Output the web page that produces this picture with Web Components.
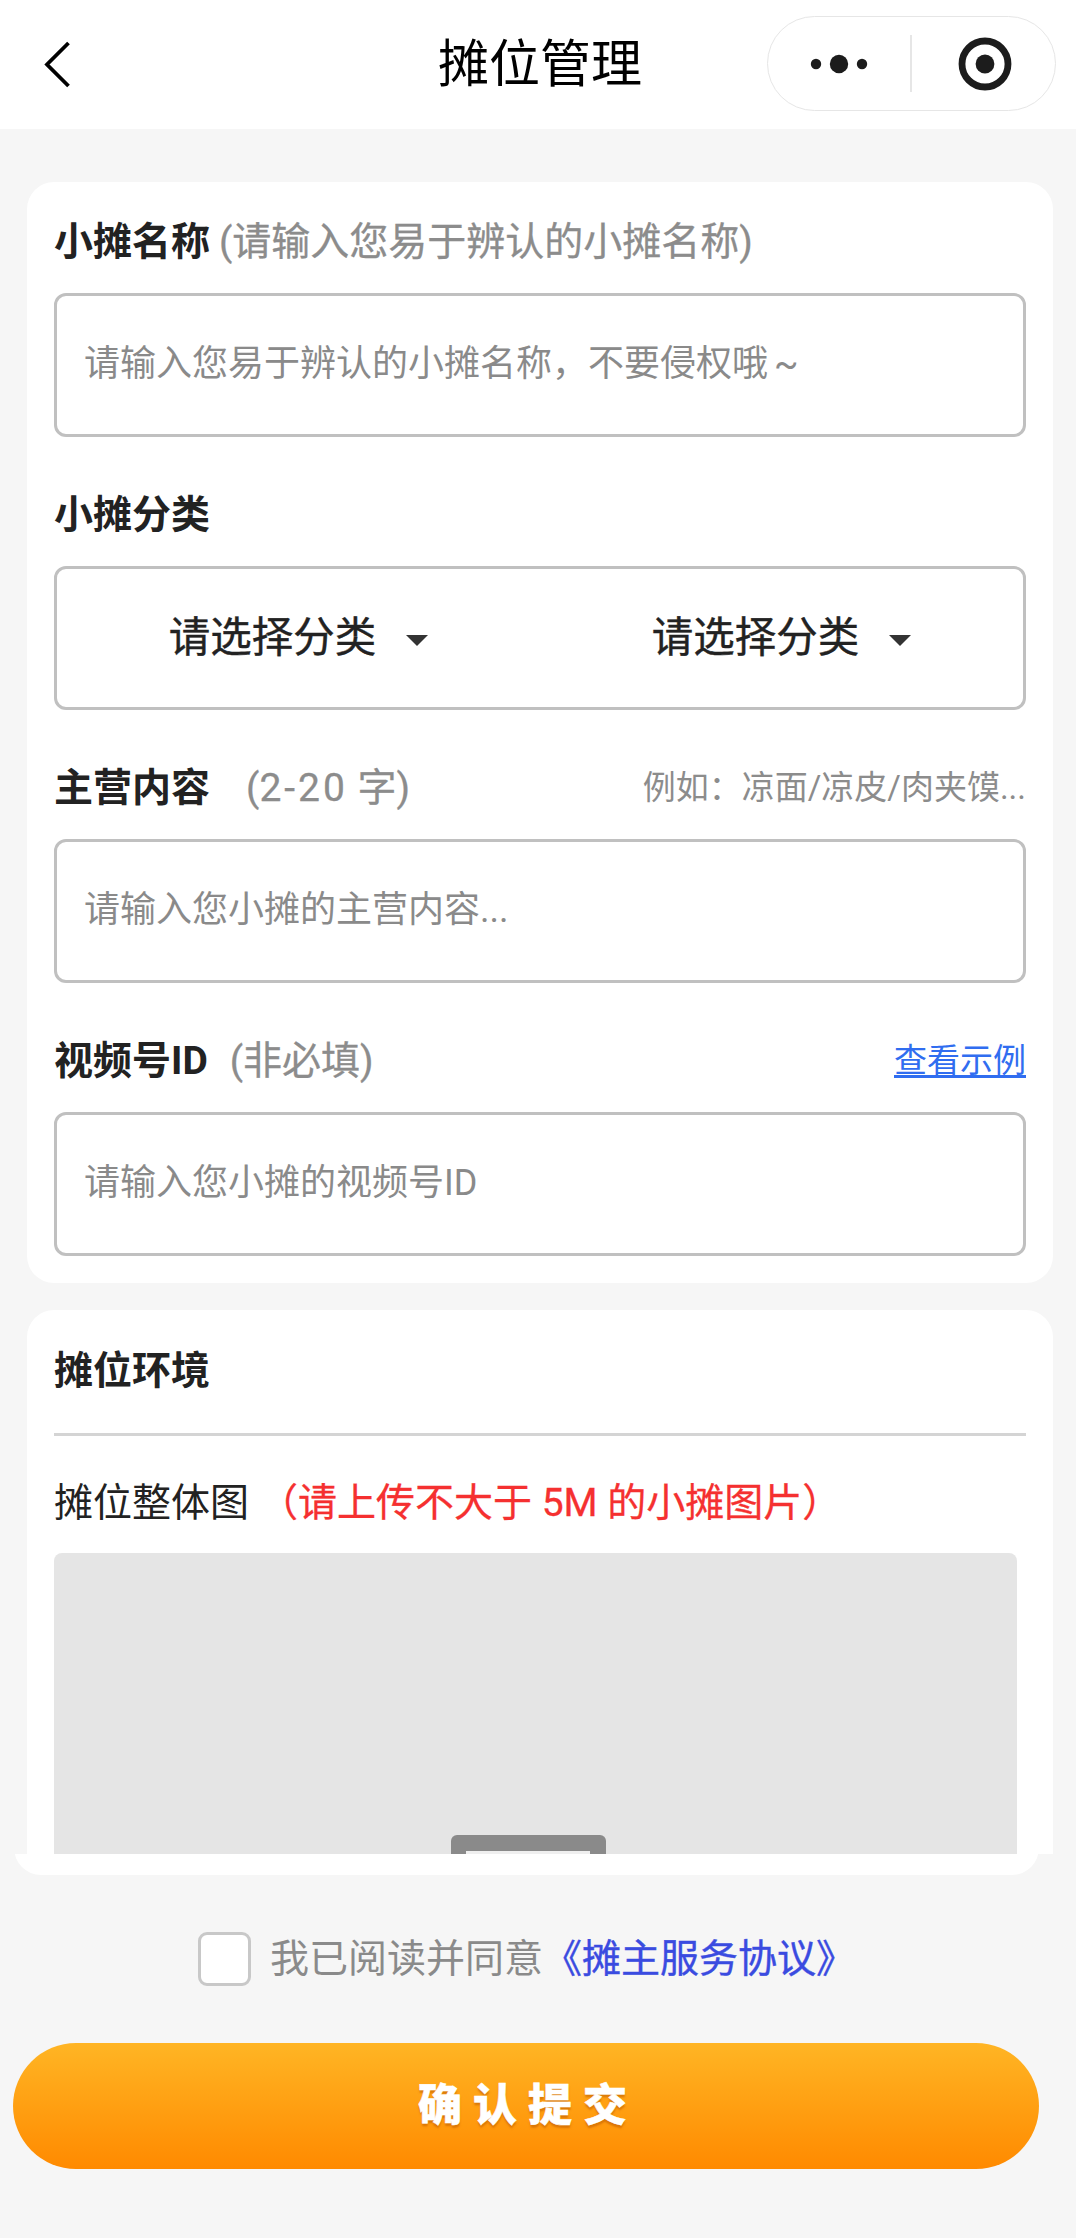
<!DOCTYPE html>
<html lang="zh">
<head>
<meta charset="utf-8">
<title>摊位管理</title>
<style>
    html, body {
        margin: 0;
        background: #f6f6f6;
    }

    body {
        width: 1076px;
        height: 2238px;
        overflow: hidden;
        font-family: Roboto, "Noto Sans CJK SC", "Noto Sans", sans-serif;
    }

    stall-page {
        display: block;
    }
</style>
</head>
<body>

<stall-page>
    <app-bar slot="bar">摊位管理</app-bar>

    <form-card>
        <field-label>小摊名称<span slot="note" style="margin-left:9px">(请输入您易于辨认的小摊名称)</span></field-label>
        <text-box>请输入您易于辨认的小摊名称，不要侵权哦 ~</text-box>

        <field-label>小摊分类</field-label>
        <select-box>
            <select-item>请选择分类</select-item>
            <select-item>请选择分类</select-item>
        </select-box>

        <field-label>主营内容<span slot="note" style="margin-left:36px">(<span style="letter-spacing:3px">2-20</span> 字)</span><span slot="aside">例如：凉面/凉皮/肉夹馍...</span></field-label>
        <text-box>请输入您小摊的主营内容...</text-box>

        <field-label>视频号ID<span slot="note" style="margin-left:22px">(非必填)</span><a slot="link">查看示例</a></field-label>
        <text-box>请输入您小摊的视频号ID</text-box>
    </form-card>

    <photo-card><span slot="title">摊位环境</span>摊位整体图<span slot="warn">（请上传不大于 5M 的小摊图片）</span></photo-card>

    <agree-row slot="foot">我已阅读并同意<span slot="link">《摊主服务协议》</span></agree-row>
    <submit-button slot="foot">确认提交</submit-button>
</stall-page>

<script>
function def(name, html) {
    customElements.define(name, class extends HTMLElement {
        constructor() {
            super()
            this.attachShadow({ mode: "open" }).innerHTML = html
        }
    })
}

def("stall-page", /*html*/`
    <style>
        :host { display: block; }

        .scroll {
            position: relative;
            z-index: 1;
            height: 1725px;
            box-sizing: border-box;
            padding: 53px 23px 0 27px;
            display: flex;
            flex-direction: column;
            gap: 27px;
            overflow: hidden;
            background: #f6f6f6;
        }

        .tail {
            width: 1025px;
            height: 48px;
            margin: -27px 0 0 14px;
            border-radius: 0 0 27px 27px;
            background: #fff;
        }

        .foot {
            width: 1025px;
            margin-left: 14px;
            padding-top: 57px;
            display: flex;
            flex-direction: column;
            gap: 57px;
        }
    </style>
    <slot name="bar"></slot>
    <div class="scroll"><slot></slot></div>
    <div class="tail"></div>
    <div class="foot"><slot name="foot"></slot></div>
`)

def("app-bar", /*html*/`
    <style>
        :host {
            display: grid;
            grid-template-columns: 1fr auto 1fr;
            height: 129px;
            box-sizing: border-box;
            padding: 16px 0 18px;
            background: #fff;
            color: #000;
        }

        .back { display: block; margin: 24px 0 0 43px; }

        .title {
            margin-left: 4px;
            font-size: 51px;
            line-height: 97px;
        }

        .capsule {
            justify-self: end;
            display: flex;
            align-items: center;
            width: 289px;
            height: 95px;
            box-sizing: border-box;
            margin-right: 20px;
            border: 1.5px solid #e6e6e6;
            border-radius: 48px;
        }

        .capsule svg { display: block; flex: none; }

        .line { width: 1.5px; height: 57px; background: #e6e6e6; flex: none; }
    </style>
    <svg class="back" width="30" height="50" viewBox="0 0 30 50">
        <path d="M25.5 3 L4 24.5 L25.5 46" fill="none" stroke="#000" stroke-width="3.8"/>
    </svg>
    <div class="title"><slot></slot></div>
    <div class="capsule">
        <svg width="142" height="60" viewBox="0 0 142 60">
            <circle cx="48" cy="30" r="5.2" fill="#1c1c1c"/>
            <circle cx="71" cy="30" r="9.2" fill="#1c1c1c"/>
            <circle cx="94" cy="30" r="5.2" fill="#1c1c1c"/>
        </svg>
        <span class="line"></span>
        <svg width="144" height="60" viewBox="0 0 144 60">
            <circle cx="73" cy="30" r="23" fill="none" stroke="#1c1c1c" stroke-width="6.8"/>
            <circle cx="73" cy="30" r="9.4" fill="#1c1c1c"/>
        </svg>
    </div>
`)

def("form-card", /*html*/`
    <style>
        :host {
            display: block;
            flex: none;
            box-sizing: border-box;
            padding: 33px 27px 27px;
            border-radius: 27px;
            background: #fff;
        }

        .stack {
            display: flex;
            flex-direction: column;
        }

        ::slotted(:last-child) { margin-bottom: 0; }
    </style>
    <div class="stack"><slot></slot></div>
`)

def("field-label", /*html*/`
    <style>
        :host {
            display: flex;
            align-items: center;
            height: 52px;
            box-sizing: border-box;
            padding-top: 2px;
            font-size: 39px;
            line-height: 46px;
            color: #222;
            white-space: nowrap;
        }

        b { font-weight: 700; }

        .note { color: #8c8c8c; font-weight: 400; -webkit-text-stroke: .3px #8c8c8c; }

        .fill { flex: 1; }

        .aside {
            font-size: 33px;
            color: #8c8c8c;
        }

        .link {
            font-size: 33px;
            color: #306df0;
            text-decoration: underline;
            text-decoration-thickness: 2.5px;
            text-underline-offset: 3px;
        }
    </style>
    <b><slot></slot></b>
    <span class="note"><slot name="note"></slot></span>
    <span class="fill"></span>
    <span class="aside"><slot name="aside"></slot></span>
    <span class="link"><slot name="link"></slot></span>
`)

def("text-box", /*html*/`
    <style>
        :host {
            display: flex;
            align-items: center;
            height: 144px;
            box-sizing: border-box;
            margin: 26px 0 51px;
            padding: 0 27px 11px;
            border: 3px solid #c0c0c0;
            border-radius: 12px;
            font-size: 36px;
            word-spacing: -3px;
            color: #8a8a8a;
        }
    </style>
    <slot></slot>
`)

def("select-box", /*html*/`
    <style>
        :host {
            display: flex;
            height: 144px;
            box-sizing: border-box;
            margin: 26px 0 51px;
            border: 3px solid #c0c0c0;
            border-radius: 12px;
        }
    </style>
    <slot></slot>
`)

def("select-item", /*html*/`
    <style>
        :host {
            flex: 1;
            display: flex;
            align-items: center;
            justify-content: center;
            gap: 30px;
            font-size: 41.5px;
            color: #222;
            -webkit-text-stroke: .4px #222;
        }

        span { margin-bottom: 8px; }

        i {
            width: 0;
            height: 0;
            margin-top: 4px;
            border-left: 11.5px solid transparent;
            border-right: 11.5px solid transparent;
            border-top: 11px solid #333;
        }
    </style>
    <span><slot></slot></span>
    <i></i>
`)

def("photo-card", /*html*/`
    <style>
        :host {
            display: block;
            flex: none;
            box-sizing: border-box;
            padding: 34px 27px 27px;
            border-radius: 27px 27px 0 0;
            background: #fff;
            font-size: 39px;
            line-height: 52px;
            color: #222;
        }

        .title { font-weight: 700; margin-top: 1px; height: 51px; }

        hr {
            height: 3px;
            margin: 37px 0 41px;
            border: 0;
            background: #d4d4d4;
        }

        .row { white-space: nowrap; height: 50px; }

        .warn { margin-left: 10px; color: #f53030; -webkit-text-stroke: .3px #f53030; }

        .shot {
            display: flex;
            justify-content: center;
            width: 963px;
            height: 440px;
            box-sizing: border-box;
            margin-top: 26px;
            padding: 282px 14px 0 0;
            border-radius: 8px;
            background: #e5e5e5;
        }

        .camera {
            width: 155px;
            height: 80px;
            box-sizing: border-box;
            padding: 16px 16px 0 15px;
            border-radius: 6px;
            background: #8a8a8a;
        }

        .camera div { height: 50px; background: #efefef; }
    </style>
    <div class="title"><slot name="title"></slot></div>
    <hr>
    <div class="row"><slot></slot><span class="warn"><slot name="warn"></slot></span></div>
    <div class="shot"><div class="camera"><div></div></div></div>
`)

def("agree-row", /*html*/`
    <style>
        :host {
            display: flex;
            align-items: center;
            justify-content: center;
            height: 54px;
            font-size: 39px;
            color: #8a8a8a;
            white-space: nowrap;
        }

        .txt { margin-bottom: 8px; }

        .check {
            width: 53px;
            height: 54px;
            box-sizing: border-box;
            margin-right: 19px;
            border: 3px solid #c8c8c8;
            border-radius: 9px;
            background: #fff;
        }

        .link { color: #3a4be0; -webkit-text-stroke: .4px #3a4be0; }
    </style>
    <span class="check"></span>
    <span class="txt"><slot></slot></span>
    <span class="txt link"><slot name="link"></slot></span>
`)

def("submit-button", /*html*/`
    <style>
        :host {
            display: flex;
            align-items: center;
            justify-content: center;
            height: 126px;
            box-sizing: border-box;
            margin-left: -1px;
            padding: 0 0 8px 4px;
            border-radius: 63px;
            background: linear-gradient(180deg, #ffb524, #ff8a00);
            color: #fff;
            font-size: 44px;
            font-weight: 900;
            letter-spacing: 11px;
            -webkit-text-stroke: .5px #fff;
            text-shadow: 0 3px 2px rgba(190, 90, 0, .55);
        }
    </style>
    <slot></slot>
`)
</script>
</body>
</html>
